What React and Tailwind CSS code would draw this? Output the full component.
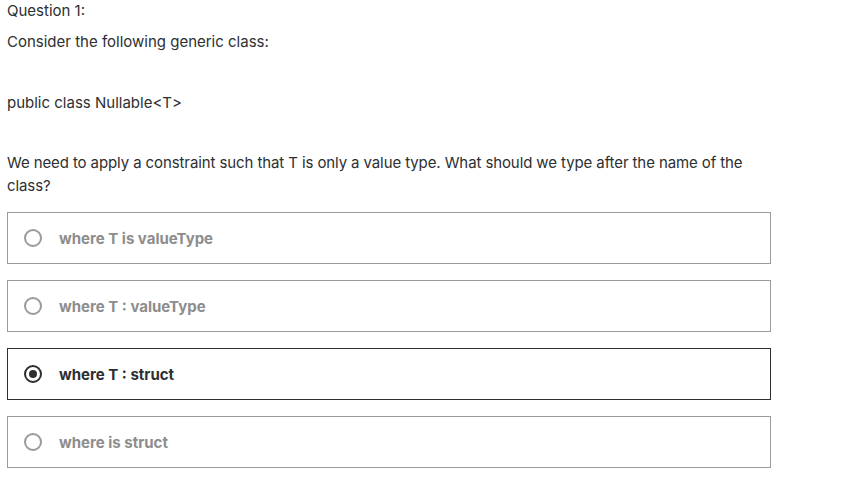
export default function App() {
  const opts = [
    { t: "where T is valueType", sel: false },
    { t: "where T : valueType", sel: false },
    { t: "where T : struct", sel: true },
    { t: "where is struct", sel: false },
  ];
  return (
    <div className="w-[862px] h-[490px] bg-white text-[#2d2f31] font-['Inter',sans-serif] text-[15px] leading-[23px] pl-[7px] overflow-hidden">
      <div className="mt-[-1px]">Question 1:</div>
      <div className="mt-[8px]">Consider the following generic class:</div>
      <div className="mt-[38px]">public class Nullable&lt;T&gt;</div>
      <div className="mt-[37px] w-[760px] tracking-[-0.1px]">
        We need to apply a constraint such that T is only a value type. What should we type after the name of the class?
      </div>
      <div className="mt-[15px] w-[764px] flex flex-col gap-[16px]">
        {opts.map((o, i) => (
          <div
            key={i}
            className={
              "h-[52px] flex items-center border pl-[16px] " +
              (o.sel ? "border-[#2d2f31]" : "border-[#9a9a9a]")
            }
          >
            <span
              className={
                "w-[18px] h-[18px] rounded-full border-2 flex items-center justify-center " +
                (o.sel ? "border-[#2d2f31]" : "border-[#9a9a9a]")
              }
            >
              {o.sel && <span className="w-[8px] h-[8px] rounded-full bg-[#2d2f31]" />}
            </span>
            <span
              className={
                "ml-[17px] text-[15px] font-bold " + (o.sel ? "text-[#2d2f31]" : "text-[#8d8d8d]")
              }
            >
              {o.t}
            </span>
          </div>
        ))}
      </div>
    </div>
  );
}
